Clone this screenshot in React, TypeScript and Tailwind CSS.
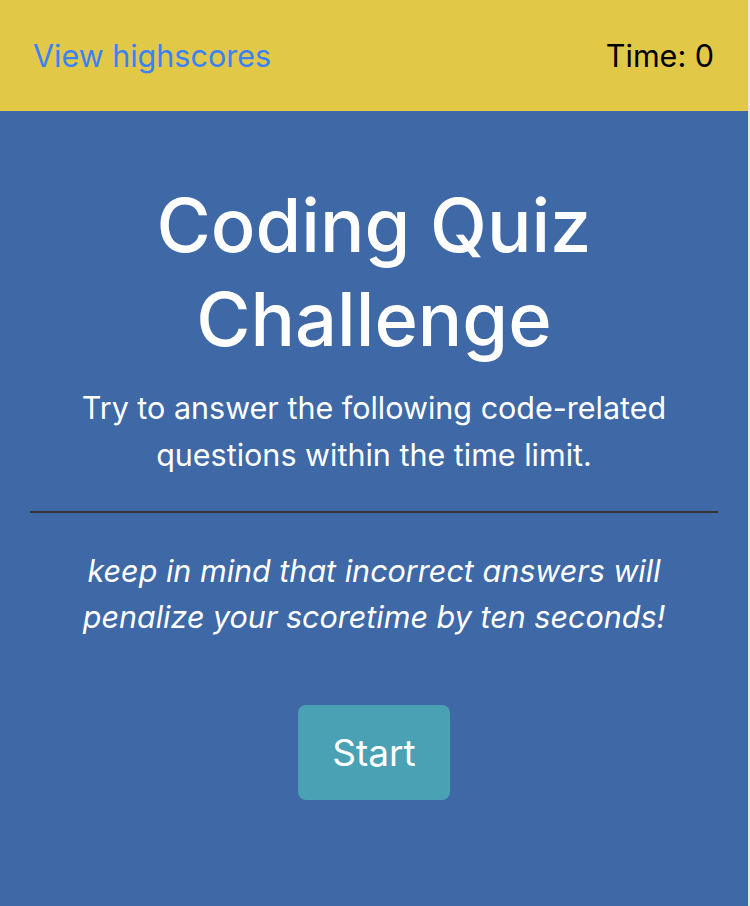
import React from "react";

const App: React.FC = () => {
  return (
    <div
      className="flex min-h-[906px] w-[750px] bg-[#e6e6e6]"
      style={{ fontFamily: "Inter, 'Noto Sans', sans-serif" }}
    >
      <div className="flex w-[748px] flex-col bg-[#3e68a6]">
        <header className="flex h-[111px] items-center justify-between bg-[#e1c847] pl-[33px] pr-[34px] text-[30.5px]">
          <a href="#" className="text-[#3b82f6]">
            View highscores
          </a>
          <span className="text-black">Time: 0</span>
        </header>

        <main className="flex flex-col items-center px-[30px] pt-[67px] text-center text-white">
          <h1 className="text-[74px] font-medium leading-[94px]">
            Coding Quiz
            <br />
            Challenge
          </h1>
          <p className="mt-[18px] w-[620px] text-[30.5px] leading-[47px]">
            Try to answer the following code-related questions within the time limit.
          </p>
          <hr className="mt-[33px] w-full border-t-2 border-[#333333]" />
          <p className="mt-[35px] w-[620px] text-[30.5px] italic leading-[46px]">
            keep in mind that incorrect answers will penalize your scoretime by ten seconds!
          </p>
          <button className="mt-[65px] h-[95px] w-[152px] rounded-lg bg-[#4aa1b4] text-[37px] text-white">
            Start
          </button>
        </main>
      </div>
    </div>
  );
};

export default App;
